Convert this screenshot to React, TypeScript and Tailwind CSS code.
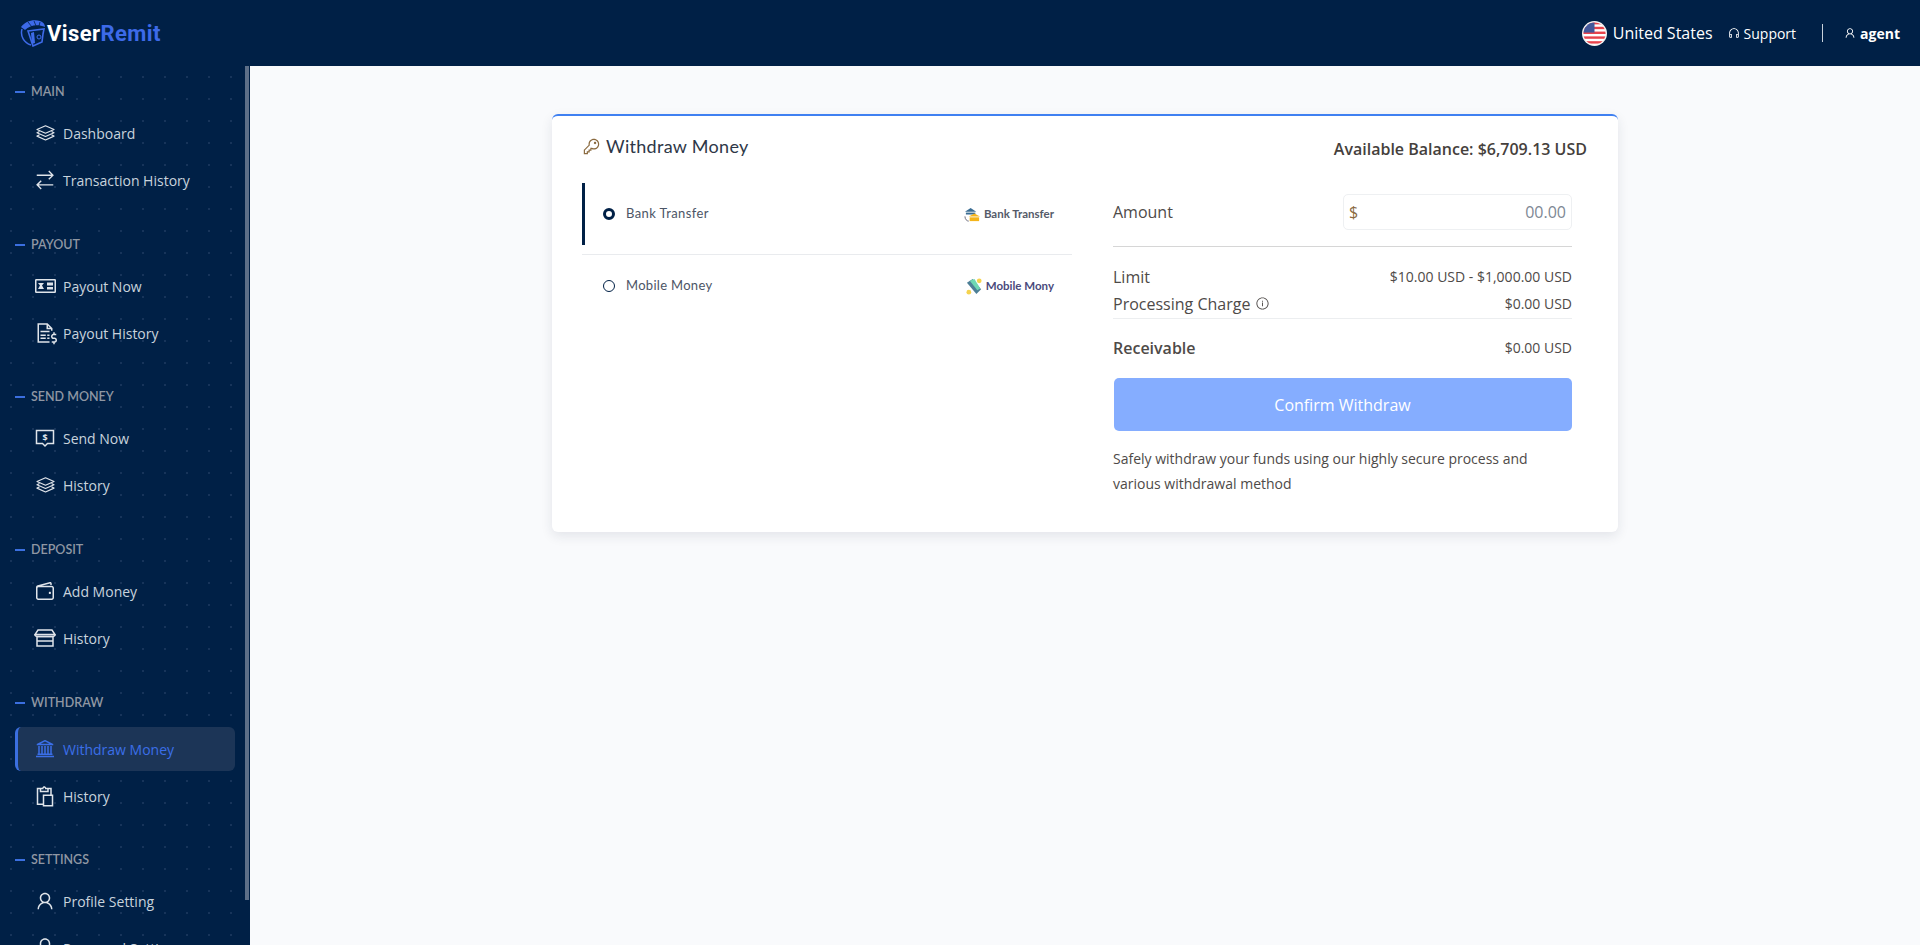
import React from "react";
import {
  LiaExchangeAltSolid,
  LiaFileInvoiceDollarSolid,
  LiaWalletSolid,
  LiaUniversitySolid,
  LiaPasteSolid,
  LiaUser,
  LiaKeySolid,
  LiaLockSolid,
  LiaHeadphonesSolid,
  LiaInfoCircleSolid,
} from "react-icons/lia";

function LayersIcon() {
  return (
    <svg width="19" height="16" viewBox="0 0 19 16" fill="none" stroke="currentColor" strokeWidth="1.200" strokeLinejoin="round">
      <path d="M9.500 0.800l8.500 3.700-8.500 3.700L1 4.500z" />
      <path d="M3.500 6.500L1 7.800l8.500 3.700L18 7.800l-2.500-1.300" />
      <path d="M3.500 9.800L1 11.100l8.500 3.900 8.500-3.900-2.500-1.300" />
    </svg>
  );
}

function SendIcon() {
  return (
    <svg width="20" height="20" viewBox="0 0 20 20" fill="none" stroke="currentColor" strokeWidth="1.5">
      <path d="M1.500 2.500h17v13h-6L10 18l-2.500-2.500h-6z" />
      <text x="10" y="12.500" fontSize="9" fontWeight="700" textAnchor="middle" fill="currentColor" stroke="none" fontFamily="'Open Sans', sans-serif">$</text>
    </svg>
  );
}

function IdIcon() {
  return (
    <svg width="21" height="14" viewBox="0 0 21 14" fill="none">
      <rect x="0.750" y="0.750" width="19.500" height="12.500" rx="0.500" stroke="currentColor" strokeWidth="1.500" />
      <path d="M3 4h6L7 6.500l2 3.500H3l2-3.500z" fill="currentColor" />
      <rect x="12" y="3.500" width="6" height="3" fill="currentColor" />
      <rect x="12" y="8" width="6" height="2.500" fill="currentColor" />
    </svg>
  );
}

function StoreIcon() {
  return (
    <svg width="22" height="18" viewBox="0 0 22 18" fill="none" stroke="currentColor" strokeWidth="1.500">
      <path d="M4 1h14l3 4.500H1z" />
      <path d="M1 5.500c0 2 2 2 3 2h14c1 0 3 0 3-2" />
      <rect x="3" y="7.500" width="16" height="9.500" />
      <path d="M3 12h16" />
    </svg>
  );
}

function Logo() {
  return (
    <svg width="27" height="27" viewBox="0 0 27 27" fill="none">
      <path d="M1 7C5 2 12-1 20 1c3 1 5 3 5 6-7-3-15-2-20 3-1-1-3-2-4-3z" fill="#3d6ae8" />
      <path d="M8 2l4 5M14 1l2 5M20 2l-1 4" stroke="#002046" strokeWidth="0.800" />
      <path d="M2 9c-2 7 2 14 9 16" stroke="#3d6ae8" strokeWidth="1.500" />
      <path d="M8 11l16-2-1 5-1 8-9 4z" stroke="#3d6ae8" strokeWidth="1.600" />
      <path d="M11 13l3-1 1 11-3 1z" fill="#3d6ae8" />
      <circle cx="19" cy="17" r="2" stroke="#3d6ae8" strokeWidth="1" />
    </svg>
  );
}

function Flag() {
  return (
    <svg width="25" height="25" viewBox="0 0 26 26">
      <circle cx="13" cy="13" r="13" fill="#f3f3f3" />
      <clipPath id="fc"><circle cx="13" cy="13" r="11.500" /></clipPath>
      <g clipPath="url(#fc)">
        <rect width="26" height="26" fill="#fff" />
        <rect y="1" width="26" height="2.500" fill="#e8434c" />
        <rect y="6" width="26" height="2.500" fill="#e8434c" />
        <rect y="11" width="26" height="2.500" fill="#e8434c" />
        <rect y="16" width="26" height="2.500" fill="#e8434c" />
        <rect y="21" width="26" height="2.500" fill="#e8434c" />
        <rect width="13" height="12" fill="#42579a" />
      </g>
    </svg>
  );
}

function BankLogo() {
  return (
    <svg width="17" height="17" viewBox="0 0 18 18">
      <path d="M1 6l6-4 6 4z" fill="#3a6d93" />
      <rect x="2" y="7" width="10" height="2" fill="#3a6d93" />
      <path d="M5 11l6-3 6 3z" fill="#f4b41a" />
      <rect x="6" y="12" width="10" height="4" fill="#f4b41a" />
      <path d="M1 11c0 3 2 5 4 5" stroke="#667" strokeWidth="1" fill="none" />
    </svg>
  );
}

function MobileLogo() {
  return (
    <svg width="17" height="17" viewBox="0 0 18 18">
      <path d="M1 5l6-4 9 11-5 5z" fill="#4d7f96" />
      <path d="M4 3l5-2 6 10-3 2z" fill="#6fd8b2" />
      <circle cx="3" cy="15" r="2.500" fill="#f5d34f" />
      <circle cx="14" cy="3" r="2.500" fill="#f5d34f" />
    </svg>
  );
}

type Item = { label: string; icon: React.ReactNode; active?: boolean };
type Section = { title: string; items: Item[]; className: string; listClass: string };

const sections: Section[] = [
  {
    title: "MAIN",
    className: "",
    listClass: "mt-[10px]",
    items: [
      { label: "Dashboard", icon: <LayersIcon /> },
      { label: "Transaction History", icon: <LiaExchangeAltSolid className="text-[22px]" /> },
    ],
  },
  {
    title: "PAYOUT",
    className: "mt-[34px]",
    listClass: "mt-[10px]",
    items: [
      { label: "Payout Now", icon: <IdIcon /> },
      { label: "Payout History", icon: <LiaFileInvoiceDollarSolid className="text-[24px]" /> },
    ],
  },
  {
    title: "SEND MONEY",
    className: "mt-[33px]",
    listClass: "mt-[10px]",
    items: [
      { label: "Send Now", icon: <SendIcon /> },
      { label: "History", icon: <LayersIcon /> },
    ],
  },
  {
    title: "DEPOSIT",
    className: "mt-[34px]",
    listClass: "mt-[10px]",
    items: [
      { label: "Add Money", icon: <LiaWalletSolid className="text-[24px]" /> },
      { label: "History", icon: <StoreIcon /> },
    ],
  },
  {
    title: "WITHDRAW",
    className: "mt-[34px]",
    listClass: "mt-[15px]",
    items: [
      { label: "Withdraw Money", icon: <LiaUniversitySolid className="text-[24px]" />, active: true },
      { label: "History", icon: <LiaPasteSolid className="text-[24px]" /> },
    ],
  },
  {
    title: "SETTINGS",
    className: "mt-[33px]",
    listClass: "mt-[10px]",
    items: [
      { label: "Profile Setting", icon: <LiaUser className="text-[24px]" /> },
      { label: "Password Setting", icon: <LiaLockSolid className="text-[24px]" /> },
    ],
  },
];

function Sidebar() {
  return (
    <aside className="relative w-[250px] shrink-0 overflow-hidden bg-[#002046] bg-[radial-gradient(#17345a_1px,transparent_1px)] bg-[size:22px_22px] pt-[17px] font-['Open_Sans',sans-serif]">
      {sections.map((s) => (
        <div key={s.title} className={s.className}>
          <div className="flex h-[18px] items-center pl-[15px] font-['Lato',sans-serif] text-[12.500px] font-semibold text-[#8f97a3]">
            <span className="mr-[6px] h-[2px] w-[10px] bg-[#3b6fe0]" />
            {s.title}
          </div>
          <div className={`${s.listClass} flex flex-col gap-[3px]`}>
            {s.items.map((it) =>
              it.active ? (
                <div key={it.label} className="ml-[15px] flex h-[44px] w-[220px] items-center rounded-[6px] border-l-[3px] border-[#3b6fe0] bg-[#1c3557] pl-[15px] text-[14px] text-[#3b6fe8]">
                  <span className="flex w-[30px] justify-center pr-[6px]">{it.icon}</span>
                  <span>{it.label}</span>
                </div>
              ) : (
                <div key={it.label} className="ml-[15px] flex h-[44px] w-[220px] items-center pl-[18px] text-[14px] text-[#c8d3dd]">
                  <span className="flex w-[30px] justify-center pr-[6px] text-[#dfe4ea]">{it.icon}</span>
                  <span>{it.label}</span>
                </div>
              )
            )}
          </div>
        </div>
      ))}
      <div className="absolute left-[245px] top-0 h-[834px] w-[4px] bg-[#5d6f88]" />
    </aside>
  );
}

function Header() {
  return (
    <header className="flex h-[66px] shrink-0 items-center justify-between bg-[#002046] pl-[20px] pr-[20px] font-['Open_Sans',sans-serif]">
      <div className="flex items-center">
        <Logo />
        <span className="font-['Roboto',sans-serif] text-[22px] font-bold tracking-[0.4px] text-white">
          Viser<span className="text-[#3d6ae8]">Remit</span>
        </span>
      </div>
      <div className="flex items-center text-white">
        <Flag />
        <span className="ml-[6px] text-[16px]">United States</span>
        <LiaHeadphonesSolid className="ml-[14px] text-[14px]" />
        <span className="ml-[3px] text-[14px]">Support</span>
        <span className="ml-[26px] h-[18px] w-px bg-[#c9d2dc]" />
        <LiaUser className="ml-[20px] text-[14px]" />
        <span className="ml-[3px] text-[14px] font-bold">agent</span>
      </div>
    </header>
  );
}

function Card() {
  return (
    <div className="mx-auto mt-[48px] h-[418px] w-[1066px] rounded-[6px] border-t-2 border-[#3f80f1] bg-white pl-[30px] pr-[31px] pt-[15px] shadow-[0_4px_12px_rgba(30,40,70,0.1)]">
      <div className="flex items-center justify-between">
        <div className="flex items-center text-[#2e3747]">
          <LiaKeySolid className="text-[19px] text-[#8a6a3f]" />
          <span className="ml-[5px] font-['Lato',sans-serif] text-[18px] tracking-[0.3px]">Withdraw Money</span>
        </div>
        <span className="mt-[6px] text-[16px] font-semibold text-[#45403c]">Available Balance: $6,709.13 USD</span>
      </div>
      <div className="mt-[22px] flex">
        <div className="w-[490px] shrink-0">
          <div className="flex h-[62px] items-center border-l-[3px] border-[#002046] pl-[18px] pr-[18px]">
            <span className="h-[12px] w-[12px] rounded-full border-[3px] border-[#002046]" />
            <span className="ml-[11px] font-['Lato',sans-serif] text-[13px] tracking-[0.4px] text-[#4c5566]">Bank Transfer</span>
            <span className="ml-auto flex items-center font-['Lato',sans-serif] text-[11.500px] font-bold text-[#555b69]">
              <BankLogo />
              <span className="ml-[3px]">Bank Transfer</span>
            </span>
          </div>
          <div className="mt-[9px] border-t border-[#e9ebee]" />
          <div className="flex h-[62px] items-center pl-[21px] pr-[18px]">
            <span className="h-[12px] w-[12px] rounded-full border border-[#002046]" />
            <span className="ml-[11px] font-['Lato',sans-serif] text-[13px] tracking-[0.3px] text-[#4c5566]">Mobile Money</span>
            <span className="ml-auto flex items-center font-['Lato',sans-serif] text-[11.500px] font-bold text-[#4a4a7c]">
              <MobileLogo />
              <span className="ml-[3px]">Mobile Mony</span>
            </span>
          </div>
        </div>
        <div className="ml-[41px] w-[459px] shrink-0 text-[#4e4a48]">
          <div className="mt-[11px] flex items-center justify-between">
            <span className="text-[16px]">Amount</span>
            <div className="flex h-[36px] w-[229px] items-center justify-between rounded-[5px] border border-[#eef0f2] px-[5px] text-[16px]">
              <span className="text-[#8a6a3f]">$</span>
              <span className="text-[#7d8794]">00.00</span>
            </div>
          </div>
          <div className="mt-[16px] border-t border-[#d6d6d6]" />
          <div className="mt-[16px] flex h-[27px] items-center justify-between">
            <span className="text-[16px]">Limit</span>
            <span className="text-[14px]">$10.00 USD - $1,000.00 USD</span>
          </div>
          <div className="flex h-[27px] items-center justify-between">
            <span className="flex items-center text-[16px]">
              Processing Charge
              <LiaInfoCircleSolid className="ml-[5px] text-[15px]" />
            </span>
            <span className="text-[14px]">$0.00 USD</span>
          </div>
          <div className="mt-[1px] border-t border-[#eceef0]" />
          <div className="mt-[15px] flex h-[27px] items-center justify-between">
            <span className="text-[16px] font-semibold">Receivable</span>
            <span className="text-[14px]">$0.00 USD</span>
          </div>
          <button className="mx-auto mt-[17px] flex h-[53px] w-[458px] items-center justify-center rounded-[5px] bg-[#85adff] text-[16px] font-medium text-white">
            Confirm Withdraw
          </button>
          <p className="mt-[15px] text-[14px] leading-[25px] text-[#4e4a48]">
            Safely withdraw your funds using our highly secure process and
            <br />
            various withdrawal method
          </p>
        </div>
      </div>
    </div>
  );
}

export default function App() {
  return (
    <div className="flex h-screen flex-col overflow-hidden bg-[#f9fafc]">
      <Header />
      <div className="flex min-h-0 flex-1">
        <Sidebar />
        <main className="min-w-0 flex-1 font-['Open_Sans',sans-serif]">
          <Card />
        </main>
      </div>
    </div>
  );
}
